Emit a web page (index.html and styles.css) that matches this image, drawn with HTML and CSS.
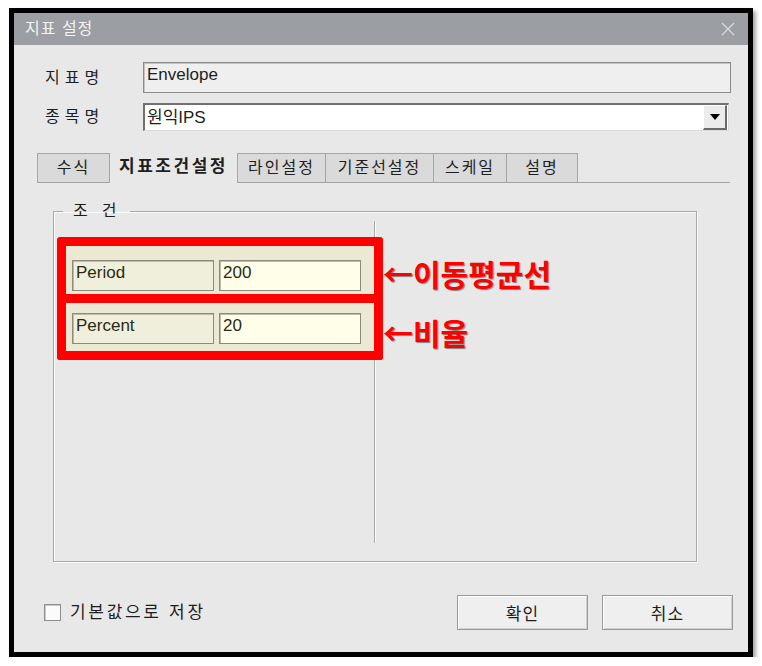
FILE: index.html
```html
<!DOCTYPE html>
<html lang="ko">
<head>
    <meta charset="UTF-8">
    <title>지표 설정</title>
    <link rel="stylesheet" href="styles.css">
</head>
<body>
    <div class="window">
        <div class="titlebar">
            <span class="title">지표 설정</span>
            <svg class="close" width="14" height="14" viewBox="0 0 14 14">
                <path d="M1 1L13 13M13 1L1 13" stroke="#d8dadd" stroke-width="1.3" fill="none"/>
            </svg>
        </div>
        <div class="content">
            <div class="row">
                <span class="lbl">지표명</span>
                <div class="field-ro">Envelope</div>
            </div>
            <div class="row">
                <span class="lbl">종목명</span>
                <div class="combo">
                    <span class="combo-text">원익IPS</span>
                    <span class="drop">
                        <svg width="10" height="6" viewBox="0 0 10 6"><path d="M0 0H10L5 6Z" fill="#000"/></svg>
                    </span>
                </div>
            </div>
            <div class="tabs">
                <span class="tab w1">수식</span>
                <span class="tab active">지표조건설정</span>
                <span class="tab w3">라인설정</span>
                <span class="tab w4">기준선설정</span>
                <span class="tab w5">스케일</span>
                <span class="tab w6">설명</span>
            </div>
            <fieldset class="group">
                <legend>조건</legend>
                <div class="pane">
                    <div class="mark-row">
                        <div class="mark first">
                            <div class="cell name">Period</div>
                            <div class="cell val">200</div>
                        </div>
                        <span class="note low">←이동평균선</span>
                    </div>
                    <div class="mark-row">
                        <div class="mark second">
                            <div class="cell name">Percent</div>
                            <div class="cell val">20</div>
                        </div>
                        <span class="note">←비율</span>
                    </div>
                </div>
            </fieldset>
            <div class="footer">
                <label class="check"><span class="box"></span>기본값으로 저장</label>
                <div class="buttons">
                    <button class="btn">확인</button>
                    <button class="btn">취소</button>
                </div>
            </div>
        </div>
    </div>
</body>
</html>
```

FILE: styles.css
```css
* {margin: 0; padding: 0; box-sizing: border-box;}
body {
background: #fff;
font: 16px "Liberation Sans", "Noto Sans CJK KR", sans-serif;
color: #1e1e1e;
}
.window {
width: 744px;
height: 649px;
margin: 8px 0 0 9px;
border: 5px solid #000;
background: #e8e8e8;
box-shadow: 3px 3px 4px rgba(0, 0, 0, 0.35);
}
.titlebar {
height: 32px;
background: #9b9ea3;
display: flex;
align-items: center;
justify-content: space-between;
padding: 0 13px 0 11px;
}
.title {color: #f4f4f4; font-size: 16px; letter-spacing: 1px; line-height: 20px;}
.content {padding-top: 17px;}
.row {display: flex; align-items: center; padding: 0 17px 0 31px;}
.row + .row {margin-top: 10px;}
.lbl {width: 98px; font-size: 16px; letter-spacing: 5px; line-height: 20px;}
.field-ro {
flex: 1;
height: 31px;
background: #efefef;
border: 1px solid #8b8b8b;
box-shadow: inset 1px 1px #c4c4c4;
padding: 1px 3px;
font-size: 17px;
line-height: 22px;
}
.combo {
flex: 1;
height: 28px;
margin-right: 2px;
background: #fff;
border-top: 2px solid #707070;
border-left: 2px solid #707070;
border-right: 1px solid #dcdcdc;
border-bottom: 1px solid #dcdcdc;
display: flex;
align-items: center;
justify-content: space-between;
padding-left: 2px;
}
.combo-text {font-size: 17px; line-height: 22px;}
.drop {
width: 24px;
height: 25px;
margin-right: 1px;
background: #ececec;
border-top: 1px solid #fff;
border-left: 1px solid #fff;
border-right: 2px solid #6a6a6a;
border-bottom: 2px solid #6a6a6a;
display: flex;
align-items: center;
justify-content: center;
}
.tabs {
display: flex;
align-items: flex-end;
height: 30px;
margin: 22px 18px 0 23px;
border-bottom: 1px solid #a3a3a3;
}
.tab {
height: 29px;
background: #dadada;
border: 1px solid #a6a6a6;
border-bottom: 0;
text-align: center;
font-size: 16px;
line-height: 27px;
letter-spacing: 2px;
}
.tab + .tab {border-left: 0;}
.tab.active + .tab {border-left: 1px solid #a6a6a6;}
.w1 {width: 73px;}
.w3 {width: 89px;}
.w4 {width: 108px;}
.w5 {width: 73px;}
.w6 {width: 71px;}
.tab.active {
width: 127px;
height: 31px;
margin-bottom: -1px;
background: #e8e8e8;
border: 0;
font-weight: bold;
font-size: 17px;
letter-spacing: 2.5px;
line-height: 29px;
}
.group {
width: 644px;
margin: 18px 0 0 39px;
border: 1px solid #a9a9a9;
box-shadow: inset 1px 1px #fbfbfb, 1px 1px #fbfbfb;
}
.group legend {
margin-left: 9px;
padding-left: 10px;
font-size: 16px;
line-height: 20px;
letter-spacing: 14px;
}
.pane {
width: 321px;
height: 322px;
margin-bottom: 18px;
padding: 16px 0 0 3px;
border-right: 1px solid #a9a9a9;
box-shadow: 1px 0 #fbfbfb;
}
.mark-row {display: flex; align-items: center; width: max-content;}
.mark {
width: 326px;
display: flex;
gap: 5px;
background: #ebe9d4;
border: 9px solid #f00;
}
.mark.first {padding: 14px 13px 3px 6px; border-radius: 3px 3px 0 0;}
.mark.second {padding: 10px 13px 7px 6px; border-top: 0; border-radius: 0 0 3px 3px;}
.cell {
width: 142px;
height: 31px;
border: 1px solid #8b8b7b;
box-shadow: inset 1px 1px #bdbca8;
padding: 1px 3px;
font-size: 17px;
line-height: 22px;
color: #2a2a12;
}
.cell.name {background: #f0efdc;}
.cell.val {background: #fffee9;}
.note {
color: #f00;
font: bold 30px "Noto Sans CJK KR", sans-serif;
line-height: 34px;
text-shadow: 1px 1px 1px rgba(0, 0, 0, 0.45);
}
.note.low {margin-top: 6px;}
.footer {
display: flex;
align-items: center;
justify-content: space-between;
margin-top: 33px;
padding: 0 15px 0 30px;
}
.check {display: flex; align-items: center; gap: 9px; font-size: 17px; letter-spacing: 2.7px; line-height: 22px;}
.box {
width: 17px;
height: 17px;
background: #fbfbfb;
border: 1px solid #8e8e8e;
box-shadow: inset 1px 1px #c8c8c8;
}
.buttons {display: flex; gap: 14px;}
.btn {
width: 131px;
height: 35px;
background: #efefef;
border: 1px solid #9a9a9a;
box-shadow: inset 1px 1px #fff, inset -1px -1px #cfcfcf;
font: 17px "Liberation Sans", "Noto Sans CJK KR", sans-serif;
letter-spacing: 1px;
color: #1e1e1e;
}
```
